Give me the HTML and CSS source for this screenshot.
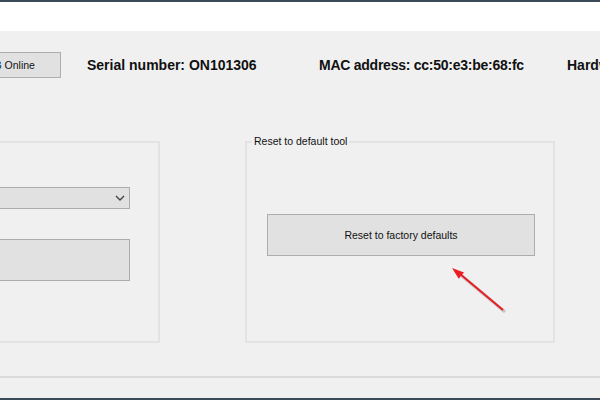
FILE: index.html
```html
<!DOCTYPE html>
<html>
<head>
<meta charset="utf-8">
<link rel="stylesheet" href="styles.css">
</head>
<body>
<div class="topbar"></div>
<div class="titlearea"></div>
<div class="main">
  <div class="info">
    <div class="btn online-btn"><span class="cut">B</span><span class="online-text">Online</span></div>
    <div class="info-label">Serial number: ON101306</div>
    <div class="info-label mac">MAC address: cc:50:e3:be:68:fc</div>
    <div class="info-label">Hardware version: 1.0</div>
  </div>
  <div class="groups">
    <div class="group group-left">
      <div class="combo">
        <svg class="chev" width="10" height="6" viewBox="0 0 10 6"><polyline points="1,1 5,5 9,1" fill="none" stroke="#404040" stroke-width="1.3"/></svg>
      </div>
      <div class="btn big-btn"></div>
    </div>
    <div class="group group-right">
      <span class="group-title">Reset to default tool</span>
      <div class="btn big-btn reset-btn">Reset to factory defaults</div>
    </div>
  </div>
  <div class="footer-line"></div>
</div>
<div class="bottombar"></div>
<svg class="arrow" width="600" height="400" viewBox="0 0 600 400">
  <line x1="505" y1="312" x2="462" y2="276" stroke="rgba(0,0,0,0.18)" stroke-width="3"/>
  <line x1="503" y1="310" x2="460" y2="274" stroke="#ea1c24" stroke-width="2"/>
  <polygon points="452,268 464,272.5 458.7,278.7" fill="#ea1c24"/>
</svg>
</body>
</html>
```
FILE: styles.css
```css
html, body {
  margin: 0;
  padding: 0;
  width: 600px;
  height: 400px;
  overflow: hidden;
  background: #f0f0f0;
  font-family: "Liberation Sans", Arial, sans-serif;
  position: relative;
}
.topbar {
  height: 2px;
  background: #3b4a58;
}
.titlearea {
  height: 29px;
  background: #ffffff;
}
.main {
  height: 367px;
  background: #f0f0f0;
  display: flex;
  flex-direction: column;
}
.info {
  margin-top: 21px;
  height: 26px;
  display: grid;
  grid-template-columns: 87px 232px 248px auto;
  align-items: center;
  white-space: nowrap;
}
.btn {
  box-sizing: border-box;
  background: #e1e1e1;
  border: 1px solid #adadad;
  font-size: 10.5px;
  color: #111;
  display: flex;
  align-items: center;
}
.online-btn {
  width: 62px;
  height: 26px;
  margin-left: -1px;
  overflow: hidden;
}
.cut {
  margin-left: -6px;
  color: #2b4a7a;
  font-weight: bold;
}
.online-text {
  margin-left: 3px;
}
.info-label {
  font-size: 14px;
  font-weight: bold;
  color: #111;
  overflow: hidden;
}
.mac {
  letter-spacing: -0.25px;
}
.groups {
  margin-top: 63px;
  height: 202px;
  display: flex;
}
.group {
  box-sizing: border-box;
  height: 202px;
  border: 2px solid #e3e3e3;
  position: relative;
  flex: none;
}
.group-left {
  margin-left: -100px;
  width: 260px;
  padding: 44px 28px 0 0;
}
.combo {
  box-sizing: border-box;
  height: 22px;
  background: #e1e1e1;
  border: 1px solid #adadad;
  display: flex;
  align-items: center;
  justify-content: flex-end;
  padding-right: 4px;
}
.big-btn {
  height: 42px;
  margin-top: 30px;
}
.group-right {
  margin-left: 85px;
  width: 310px;
  padding: 71px 0 0 20px;
}
.group-title {
  position: absolute;
  top: -8px;
  left: 5px;
  padding: 0 2px;
  background: #f0f0f0;
  font-size: 10.5px;
  color: #111;
  line-height: 12px;
}
.reset-btn {
  margin-top: 0;
  width: 268px;
  justify-content: center;
}
.footer-line {
  margin-top: 33px;
  height: 2px;
  background: #dadada;
}
.bottombar {
  height: 2px;
  background: #3b4a58;
}
.arrow {
  position: absolute;
  left: 0;
  top: 0;
  pointer-events: none;
}
```
